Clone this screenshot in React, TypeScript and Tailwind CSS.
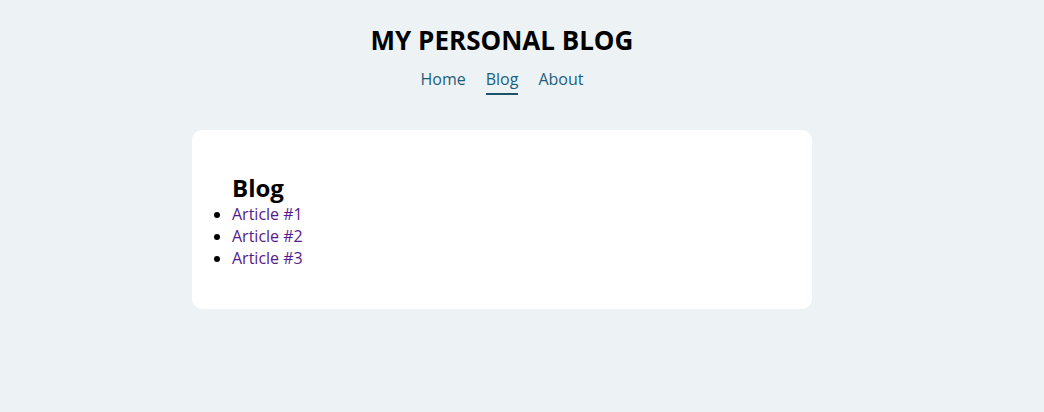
const navItems = ["Home", "Blog", "About"];

const App = () => {
  return (
    <div className="min-h-screen bg-[#edf2f5] font-['Open_Sans',sans-serif] text-black">
      <div className="w-[1004px] flex flex-col items-center">
        <header className="pt-[24px] flex flex-col items-center">
          <h1 className="text-[26px] font-bold leading-[32px]">MY PERSONAL BLOG</h1>
          <nav className="mt-[12px] flex gap-5">
            {navItems.map((item) => (
              <a
                key={item}
                href="#"
                className={`text-base leading-[22px] text-[#1b5f7c] pb-[3px] border-b-2 ${
                  item === "Blog" ? "border-[#1e5268]" : "border-transparent"
                }`}
              >
                {item}
              </a>
            ))}
          </nav>
        </header>
        <main className="mt-[35px] w-[620px] bg-white rounded-[10px] p-10">
          <h2 className="text-2xl font-bold leading-[31px] pt-[2px]">Blog</h2>
          <ul className="list-disc list-outside">
            {[1, 2, 3].map((n) => (
              <li key={n} className="leading-[22px]">
                <a href="#" className="text-[#551a8b]">
                  Article #{n}
                </a>
              </li>
            ))}
          </ul>
        </main>
      </div>
    </div>
  );
};

export default App;
